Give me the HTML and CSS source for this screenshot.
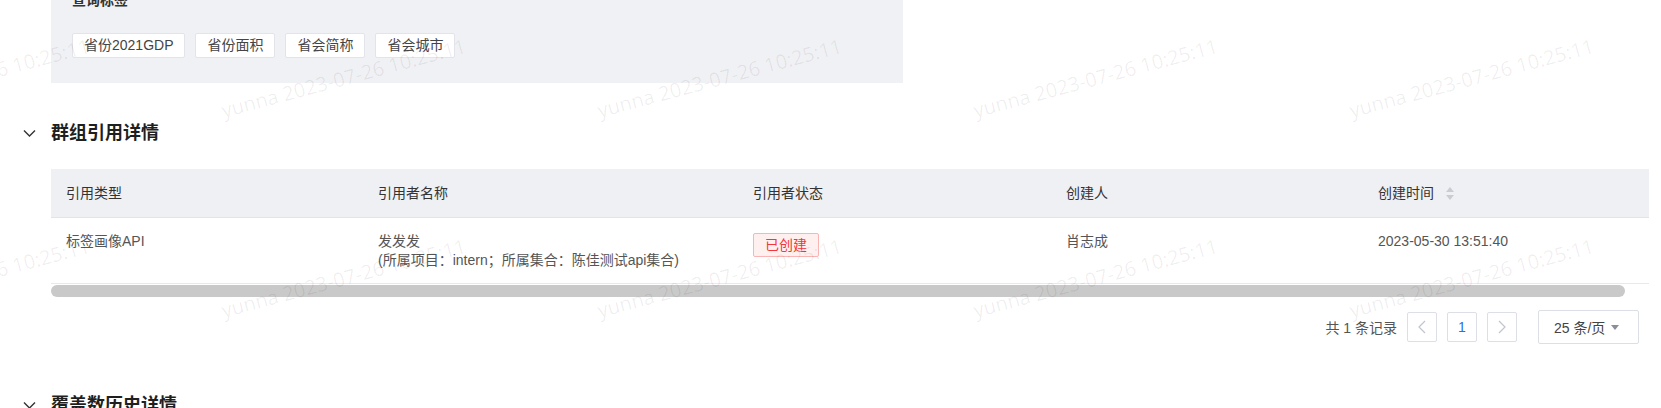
FILE: index.html
```html
<!DOCTYPE html>
<html lang="zh-CN">
<head>
  <meta charset="UTF-8" />
  <meta name="viewport" content="width=device-width, initial-scale=1.0" />
  <title>群组详情</title>
  <link rel="stylesheet" href="styles.css">
</head>
<body>
  <div class="watermark" id="watermark"></div>

  <main class="page">
    <section class="tag-panel">
      <div class="panel-label">查询标签</div>
      <div class="tag-list">
        <span class="tag">省份2021GDP</span>
        <span class="tag">省份面积</span>
        <span class="tag">省会简称</span>
        <span class="tag">省会城市</span>
      </div>
    </section>

    <section class="detail">
      <div class="detail-head">
        <svg class="fold-icon" width="13" height="8" viewBox="0 0 13 8"><path d="M1 1.5 L6.5 7 L12 1.5" /></svg>
        <h2>群组引用详情</h2>
      </div>
      <div class="detail-body">
        <div class="table-scroll">
          <table class="ref-table">
            <colgroup>
              <col style="width: 312px">
              <col style="width: 375px">
              <col style="width: 313px">
              <col style="width: 312px">
              <col style="width: 310px">
            </colgroup>
            <thead>
              <tr>
                <th>引用类型</th>
                <th>引用者名称</th>
                <th>引用者状态</th>
                <th>创建人</th>
                <th>创建时间<span class="sort"><i class="up"></i><i class="down"></i></span></th>
              </tr>
            </thead>
            <tbody>
              <tr>
                <td>标签画像API</td>
                <td>发发发<br>(所属项目：intern；所属集合：陈佳测试api集合)</td>
                <td><span class="status">已创建</span></td>
                <td>肖志成</td>
                <td>2023-05-30 13:51:40</td>
              </tr>
            </tbody>
          </table>
        </div>
        <div class="scrollbar"><div class="scrollbar-thumb"></div></div>

        <div class="pager">
          <span class="pager-total">共 1 条记录</span>
          <button class="pager-btn">
            <svg width="8" height="14" viewBox="0 0 8 14"><path d="M7 1 L1 7 L7 13" /></svg>
          </button>
          <button class="pager-btn active">1</button>
          <button class="pager-btn">
            <svg width="8" height="14" viewBox="0 0 8 14"><path d="M1 1 L7 7 L1 13" /></svg>
          </button>
          <div class="page-size">25 条/页<i class="caret"></i></div>
        </div>
      </div>
    </section>

    <section class="detail">
      <div class="detail-head">
        <svg class="fold-icon" width="13" height="8" viewBox="0 0 13 8"><path d="M1 1.5 L6.5 7 L12 1.5" /></svg>
        <h2>覆盖数历史详情</h2>
      </div>
    </section>
  </main>

  <script>
    const layer = document.getElementById("watermark");
    for (let i = 0; i < 18; i++) {
      const cell = document.createElement("div");
      cell.className = "watermark-cell";
      cell.innerHTML = `<span>yunna 2023-07-26 10:25:11</span>`;
      layer.appendChild(cell);
    }
  </script>
</body>
</html>
```

FILE: styles.css
```css
html, body {
  overflow: hidden;
}

body {
  margin: 0;
  background: #fff;
  font-family: 'Liberation Sans', 'Noto Sans CJK SC', sans-serif;
  font-size: 14px;
  color: #555;
}

.page {
  padding: 0 12px 0 23px;
}

/* tag panel */
.tag-panel {
  width: 852px;
  margin: -26px 0 0 28px;
  padding: 16px 21px 25px;
  box-sizing: border-box;
  background-color: #f0f1f4;
}

.panel-label {
  line-height: 20px;
  font-weight: bold;
  color: #333;
}

.tag-list {
  display: flex;
  gap: 10px;
  margin-top: 23px;
}

.tag {
  line-height: 23px;
  padding: 0 11px;
  background: #fff;
  border: 1px solid #e2e4e9;
  border-radius: 2px;
  color: #444;
}

/* section */
.detail-head {
  display: flex;
  align-items: center;
  height: 24px;
  margin-top: 38px;
}

.detail + .detail .detail-head {
  margin-top: 49px;
}

.fold-icon {
  margin-right: 15px;
}

.fold-icon path {
  fill: none;
  stroke: #333;
  stroke-width: 1.4;
}

.detail-head h2 {
  margin: 0;
  font-size: 18px;
  line-height: 24px;
  font-weight: bold;
  color: #1f1f1f;
}

.detail-body {
  margin: 24px 0 0 28px;
}

/* table */
.table-scroll {
  overflow: hidden;
}

.ref-table {
  width: 1622px;
  table-layout: fixed;
  border-collapse: separate;
  border-spacing: 0;
}

.ref-table th {
  padding: 14px 15px;
  line-height: 20px;
  text-align: left;
  font-weight: normal;
  color: #333;
  background-color: #eff0f4;
  border-bottom: 1px solid #e2e4e8;
}

.ref-table td {
  padding: 14px 15px 13px;
  line-height: 19px;
  vertical-align: top;
  color: #555;
  border-bottom: 1px solid #e8e9ec;
}

.sort {
  display: inline-flex;
  flex-direction: column;
  gap: 3px;
  margin-left: 12px;
  vertical-align: middle;
  position: relative;
  top: -1px;
}

.sort i {
  width: 0;
  height: 0;
  border-left: 4px solid transparent;
  border-right: 4px solid transparent;
}

.sort .up {
  border-bottom: 5px solid #c9ccd3;
}

.sort .down {
  border-top: 5px solid #c9ccd3;
}

.status {
  display: inline-block;
  margin-top: 1px;
  padding: 0 11px;
  line-height: 22px;
  color: #f5363b;
  background-color: #fff0f0;
  border: 1px solid #fbb4b4;
  border-radius: 2px;
}

.scrollbar {
  margin-top: 1px;
  height: 12px;
}

.scrollbar-thumb {
  width: 98.5%;
  height: 12px;
  border-radius: 6px;
  background-color: #c9c9c9;
}

/* pagination */
.pager {
  display: flex;
  justify-content: flex-end;
  align-items: center;
  gap: 10px;
  margin-top: 13px;
  padding-right: 10px;
  height: 34px;
}

.pager-total {
  color: #555;
}

.pager-btn {
  width: 30px;
  height: 30px;
  padding: 0;
  display: flex;
  align-items: center;
  justify-content: center;
  background: #fff;
  border: 1px solid #dcdfe6;
  border-radius: 2px;
  font-family: inherit;
  font-size: 14px;
  color: #555;
}

.pager-btn path {
  fill: none;
  stroke: #c0c4cc;
  stroke-width: 1.2;
}

.pager-btn.active {
  color: #2a6ff0;
}

.page-size {
  display: flex;
  align-items: center;
  width: 101px;
  height: 34px;
  box-sizing: border-box;
  margin-left: 11px;
  padding-left: 15px;
  border: 1px solid #dcdfe6;
  border-radius: 2px;
  color: #444;
}

.caret {
  margin-left: 6px;
  width: 0;
  height: 0;
  border-left: 4px solid transparent;
  border-right: 4px solid transparent;
  border-top: 5px solid #8a8e99;
}

/* watermark */
.watermark {
  position: absolute;
  top: 0;
  left: -154px;
  display: grid;
  grid-template-columns: repeat(6, 376px);
  grid-auto-rows: 200px;
  pointer-events: none;
  z-index: 5;
}

.watermark-cell {
  position: relative;
}

.watermark-cell span {
  position: absolute;
  left: 0;
  top: 98px;
  white-space: nowrap;
  font-family: 'Open Sans', sans-serif;
  font-size: 20px;
  line-height: 26px;
  color: rgba(0, 0, 0, 0.065);
  transform: rotate(-15deg);
  transform-origin: 0 50%;
}
```
